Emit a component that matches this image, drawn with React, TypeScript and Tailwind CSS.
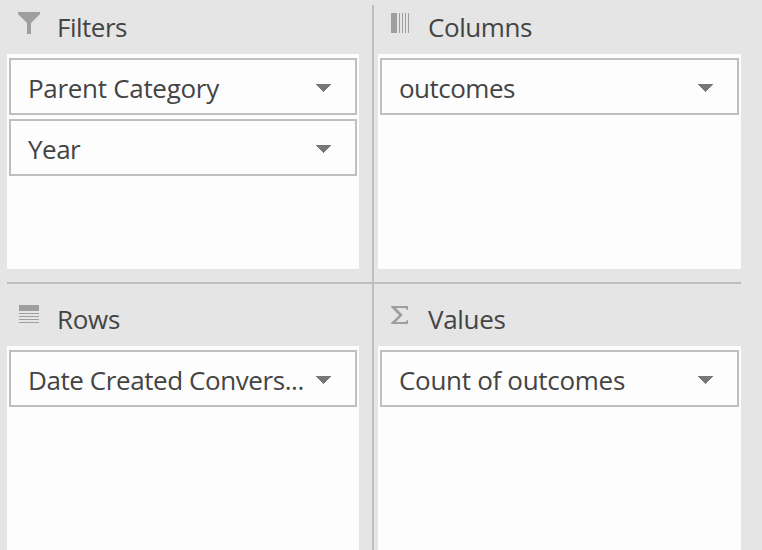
import type { ReactNode } from "react";

const FilterIcon = () => (
  <svg width="22" height="22" viewBox="0 0 22 22" className="mt-[7px] ml-[11px] shrink-0 fill-[#9f9f9f]">
    <path d="M0 0H22V2L13 11V22H9V11L0 2Z" />
  </svg>
);

const ColumnsIcon = () => (
  <svg width="18" height="20" viewBox="0 0 18 20" shapeRendering="crispEdges" className="mt-2 ml-[13px] shrink-0 fill-[#9f9f9f]">
    <path d="M0 0H6V20H0ZM8 0H9V20H8ZM11 0H12V20H11ZM14 0H15V20H14ZM17 0H18V20H17Z" />
  </svg>
);

const RowsIcon = () => (
  <svg width="20" height="18" viewBox="0 0 20 18" shapeRendering="crispEdges" className="mt-[21px] ml-3 shrink-0 fill-[#9f9f9f]">
    <path d="M0 0H20V6H0ZM0 8H20V9H0ZM0 11H20V12H0ZM0 14H20V15H0ZM0 17H20V18H0Z" />
  </svg>
);

const SigmaIcon = () => (
  <svg width="18" height="18" viewBox="0 0 18 18" className="mt-[22px] ml-[13px] shrink-0 fill-[#9f9f9f]">
    <path d="M0 0H17V4H16Q15.7 2 13.5 2H5L11.8 9L4.8 16H13.5Q15.8 16 16.3 14H17V18H0V17L8 9.2L0 1Z" />
  </svg>
);

const Field = ({ label, spacing }: { label: string; spacing: string }) => (
  <div className="flex h-[57px] items-center justify-between border-2 border-[#bfbfbf] pt-0.5 pr-6 pl-[17px]">
    <span className={`whitespace-nowrap text-[26px] leading-9 ${spacing}`}>{label}</span>
    <svg width="15" height="8" viewBox="0 0 15 8" shapeRendering="crispEdges" className="shrink-0 fill-[#777777]">
      <path d="M0 0H15V1H14V2H13V3H12V4H11V5H10V6H9V7H8V8H7V7H6V6H5V5H4V4H3V3H2V2H1V1H0Z" />
    </svg>
  </div>
);

const Title = ({ icon, children, className }: { icon: ReactNode; children: ReactNode; className: string }) => (
  <div className="flex items-start">
    <div className="w-[50px] shrink-0">{icon}</div>
    <h2 className={`text-[26px] leading-9 ${className}`}>{children}</h2>
  </div>
);

const Drop = ({ children }: { children: ReactNode }) => (
  <div className="flex grow flex-col gap-1 bg-[#fdfdfd] px-0.5 pt-1">{children}</div>
);

export default function App() {
  return (
    <main className="h-[550px] w-[762px] overflow-hidden bg-[#e5e5e5] pt-[5px] pl-[7px] font-['Open_Sans','Noto_Sans',sans-serif] text-[#444444]">
      <div className="grid h-[545px] w-[734px] grid-cols-[367px_367px] grid-rows-[279px_266px]">
        <section className="flex flex-col border-r-2 border-b-2 border-[#bfbfbf] pr-[13px] pb-[13px]">
          <div className="h-[49px]">
            <Title icon={<FilterIcon />} className="mt-1 tracking-[-0.5px]">Filters</Title>
          </div>
          <Drop>
            <Field label="Parent Category" spacing="tracking-[-0.3px]" />
            <Field label="Year" spacing="tracking-[-0.5px]" />
          </Drop>
        </section>
        <section className="flex flex-col border-b-2 border-[#bfbfbf] pb-[13px]">
          <div className="h-[49px]">
            <Title icon={<div className="ml-1"><ColumnsIcon /></div>} className="mt-1 ml-1 tracking-[-0.42px]">Columns</Title>
          </div>
          <div className="flex grow flex-col pl-1">
            <Drop>
              <Field label="outcomes" spacing="tracking-[-0.52px]" />
            </Drop>
          </div>
        </section>
        <section className="flex flex-col border-r-2 border-[#bfbfbf] pr-[13px]">
          <div className="h-[62px]">
            <Title icon={<RowsIcon />} className="mt-[17px] tracking-[-0.3px]">Rows</Title>
          </div>
          <Drop>
            <Field label="Date Created Convers..." spacing="tracking-[-0.42px]" />
          </Drop>
        </section>
        <section className="flex flex-col">
          <div className="h-[62px]">
            <Title icon={<div className="ml-1"><SigmaIcon /></div>} className="mt-[17px] ml-1 tracking-[-0.3px]">Values</Title>
          </div>
          <div className="flex grow flex-col pl-1">
            <Drop>
              <Field label="Count of outcomes" spacing="tracking-[-0.3px]" />
            </Drop>
          </div>
        </section>
      </div>
    </main>
  );
}
